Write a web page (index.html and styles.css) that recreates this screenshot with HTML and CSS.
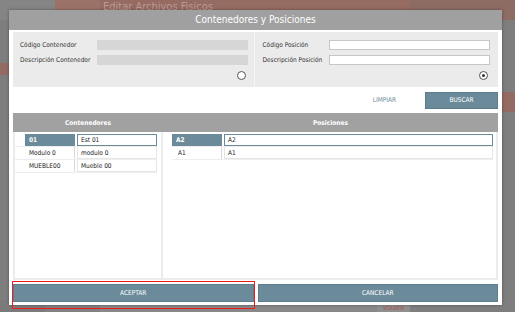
FILE: index.html
```html
<!DOCTYPE html>
<html lang="es">
<head>
<meta charset="utf-8">
<title>Contenedores y Posiciones</title>
<link rel="stylesheet" href="styles.css">
</head>
<body>
<div class="backdrop">
  <div class="bg-top">
    <div class="bg-gap"></div>
    <div class="bg-title"><span class="bg-title-text">Editar Archivos Fisicos</span></div>
    <div class="bg-right"></div>
  </div>
  <div class="bg-middle">
    <div class="bg-side bg-side-left"><div class="bg-strip bg-strip-left"></div></div>
    <div class="bg-page"></div>
    <div class="bg-side bg-side-right"><div class="bg-strip bg-strip-right"></div></div>
  </div>
  <div class="bg-bottom">
    <div class="bg-volver">VOLVER</div>
  </div>
</div>

<div class="modal">
  <div class="modal-header">Contenedores y Posiciones</div>
  <div class="modal-content">
    <div class="search">
      <div class="search-col search-left">
        <div class="field"><label class="field-label">Código Contenedor</label><div class="input input-disabled"></div></div>
        <div class="field"><label class="field-label">Descripción Contenedor</label><div class="input input-disabled"></div></div>
        <div class="radio-row"><span class="radio"></span></div>
      </div>
      <div class="search-col search-right">
        <div class="field"><label class="field-label">Código Posición</label><div class="input"></div></div>
        <div class="field"><label class="field-label">Descripción Posición</label><div class="input"></div></div>
        <div class="radio-row"><span class="radio radio-on"></span></div>
      </div>
    </div>
    <div class="actions">
      <span class="link-btn">LIMPIAR</span>
      <span class="btn btn-search">BUSCAR</span>
    </div>
    <div class="table">
      <div class="table-head">
        <div class="th th-left">Contenedores</div>
        <div class="th th-right">Posiciones</div>
      </div>
      <div class="table-body">
        <div class="col col-left">
          <div class="row"><span class="code code-sel">01</span><span class="cell cell-sel">Est 01</span></div>
          <div class="row"><span class="code">Modulo 0</span><span class="cell">modulo 0</span></div>
          <div class="row"><span class="code">MUEBLE00</span><span class="cell">Mueble 00</span></div>
        </div>
        <div class="col col-right">
          <div class="row"><span class="code code-sel">A2</span><span class="cell cell-sel">A2</span></div>
          <div class="row"><span class="code">A1</span><span class="cell">A1</span></div>
        </div>
      </div>
    </div>
    <div class="footer">
      <span class="btn btn-foot">ACEPTAR</span>
      <span class="btn btn-foot">CANCELAR</span>
    </div>
  </div>
</div>
<div class="highlight"></div>
</body>
</html>
```

FILE: styles.css
```css
* { box-sizing: border-box; }
html, body { margin: 0; padding: 0; }
body {
  width: 515px;
  height: 312px;
  overflow: hidden;
  background: #808080;
  font-family: "DejaVu Sans Condensed", "DejaVu Sans", "Liberation Sans", sans-serif;
  font-stretch: condensed;
  color: #333;
  position: relative;
}

/* dimmed page behind the dialog */
.backdrop {
  height: 312px;
  display: flex;
  flex-direction: column;
}
.bg-top {
  display: flex;
  height: 20px;
}
.bg-gap { width: 55px; background: #858585; }
.bg-title {
  width: 355px;
  height: 12px;
  background: linear-gradient(to right, #9c7268 0 45px, #956b62 45px);
  padding-left: 48px;
  overflow: hidden;
}
.bg-title-text {
  display: block;
  color: #bb9a92;
  font-size: 11px;
  line-height: 10px;
  padding-top: 2px;
}
.bg-right {
  flex: 1;
  background: #8d6c64;
}
.bg-middle {
  flex: 1;
  display: flex;
}
.bg-side { width: 55px; background: #7e7e7e; }
.bg-side-right { width: 105px; }
.bg-page { flex: 1; background: #878787; }
.bg-strip { background: #946b63; }
.bg-strip-left { width: 9px; height: 12px; margin-top: 43px; }
.bg-strip-right { width: 13px; height: 20px; margin-top: 72px; margin-left: 92px; }
.bg-bottom {
  height: 12px;
  display: flex;
  padding-left: 377px;
  background: linear-gradient(to right, #7b7b7b 0 45px, #818181 45px 100px, #888888 100px 410px, #7e7e7e 410px);
}
.bg-volver {
  width: 33px;
  background: #8f8f8f;
  color: #a8584f;
  font-size: 6px;
  padding-top: 4px;
  text-align: center;
}

/* dialog */
.modal {
  position: absolute;
  left: 9px;
  top: 10px;
  width: 493px;
  height: 295px;
  background: #ffffff;
  box-shadow: 0 0 3px rgba(0,0,0,0.35);
  display: flex;
  flex-direction: column;
}
.modal-header {
  height: 20px;
  background: #a0a0a0;
  color: #ffffff;
  font-size: 10px;
  line-height: 20px;
  text-align: center;
}
.modal-content {
  flex: 1;
  padding: 2px 4px 4px 4px;
  display: flex;
  flex-direction: column;
}
.search {
  height: 55px;
  background: #ebebeb;
  display: flex;
}
.search-col {
  flex: 1;
  padding-top: 8px;
  display: flex;
  flex-direction: column;
  gap: 5px;
}
.search-left {
  padding-left: 7px;
  padding-right: 6px;
  border-right: 1px solid #f6f6f6;
}
.search-right {
  padding-left: 8px;
  padding-right: 8px;
}
.field {
  display: flex;
  align-items: center;
  height: 10px;
}
.field-label {
  font-size: 6.5px;
  color: #333;
  white-space: nowrap;
}
.search-left .field-label { width: 77px; }
.search-right .field-label { width: 66px; }
.input {
  flex: 1;
  height: 10px;
  background: #ffffff;
  border: 1px solid #c6c6c6;
}
.input-disabled {
  background: #d6d6d6;
  border-color: #d6d6d6;
}
.radio-row {
  display: flex;
  justify-content: flex-end;
  padding-right: 2px;
  margin-top: 1px;
}
.radio {
  width: 9px;
  height: 9px;
  border-radius: 50%;
  border: 1px solid #555;
  background: #fff;
  display: flex;
  align-items: center;
  justify-content: center;
}
.radio-on::after {
  content: "";
  width: 3px;
  height: 3px;
  border-radius: 50%;
  background: #333;
}

.actions {
  height: 26px;
  display: flex;
  align-items: center;
  justify-content: flex-end;
  gap: 29px;
}
.link-btn {
  font-size: 6.5px;
  color: #6b8b9a;
}
.btn {
  background: #6b8b9a;
  color: #ffffff;
  font-size: 6.5px;
  display: flex;
  align-items: center;
  justify-content: center;
  border: 1px solid #5d7d8c;
}
.btn-search {
  width: 73px;
  height: 17px;
}

.table {
  height: 167px;
  display: flex;
  flex-direction: column;
  border: 2px solid #ececec;
  border-top: none;
}
.table-head {
  height: 19px;
  background: #a1a1a1;
  display: flex;
  margin: 0 -2px;
}
.th {
  color: #ffffff;
  font-size: 6.5px;
  font-weight: bold;
  display: flex;
  align-items: center;
  justify-content: center;
}
.th-left { width: 150px; }
.th-right { flex: 1; }
.table-body {
  flex: 1;
  display: flex;
}
.col {
  display: flex;
  flex-direction: column;
  padding-top: 2px;
}
.col-left {
  width: 148px;
  padding-right: 4px;
  border-right: 2px solid #ececec;
}
.col-right {
  flex: 1;
  padding-left: 9px;
  padding-right: 3px;
}
.row {
  height: 13px;
  display: flex;
  border-bottom: 1px solid #eeeeee;
}
.col-left .row { padding-left: 10px; }
.code {
  width: 50px;
  font-size: 6.5px;
  padding-left: 4px;
  display: flex;
  align-items: center;
  border-right: 1px solid #d8d8d8;
  color: #222;
}
.col-right .code { padding-left: 6px; }
.code-sel {
  background: #6b8b9a;
  color: #ffffff;
  font-weight: bold;
  border-right: none;
}
.col-right .code-sel { padding-left: 4px; }
.cell {
  flex: 1;
  margin-left: 2px;
  font-size: 6.5px;
  padding-left: 3px;
  display: flex;
  align-items: center;
  border: 1px solid #e6e6e6;
  border-top: none;
  background: #fff;
  color: #222;
}
.cell-sel {
  border: 1.5px solid #6b8b9a;
}

.footer {
  margin-top: 4px;
  height: 18px;
  display: flex;
  gap: 4px;
}
.btn-foot {
  flex: 1;
}

/* annotation outline around ACEPTAR */
.highlight {
  position: absolute;
  left: 12px;
  top: 281px;
  width: 243px;
  height: 28px;
  border: 1.5px solid #ee1c1c;
}
```
